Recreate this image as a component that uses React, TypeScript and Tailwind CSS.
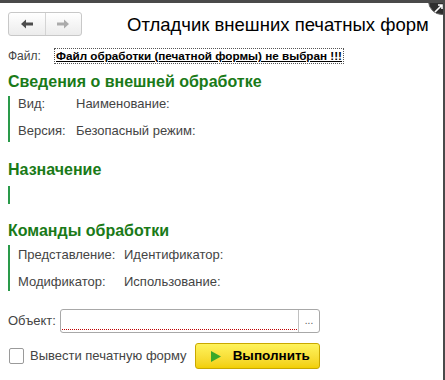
import React from 'react';

const Group: React.FC<{ title: string; children?: React.ReactNode; lineClass: string; className?: string }> = ({
  title,
  children,
  lineClass,
  className,
}) => (
  <div className={`flex flex-col ${className ?? ''}`}>
    <div className="text-[16px] font-bold text-[#1a7a18] leading-[18px]">{title}</div>
    <div className={`border-l-2 border-[#2a9a4a] ${lineClass}`}>{children}</div>
  </div>
);

export default function App() {
  return (
    <div
      className="relative w-[445px] h-[380px] overflow-hidden bg-white border-t-[3px] border-r-2 border-[#4a4a4a] text-[#444]"
      style={{ fontFamily: '"Liberation Sans", Arial, sans-serif' }}
    >
      <div className="absolute -right-[13px] -top-[16px] w-[28px] h-[28px] rounded-full bg-[#2e2e2e] border border-[#666]">
        <svg width="10" height="10" viewBox="0 0 10 10" className="absolute left-[5px] top-[15px]">
          <path d="M1 9 L8 2 M4 2 H8 V6" stroke="white" strokeWidth="1.6" fill="none" />
        </svg>
      </div>

      <div className="flex items-center pl-2 pt-[7px]">
        <div className="flex h-[24px] w-[74px] rounded-[3px] border border-[#c8c8c8] bg-gradient-to-b from-white to-[#ececec]">
          <div className="flex flex-1 items-center justify-center border-r border-[#d4d4d4]">
            <svg width="14" height="10" viewBox="0 0 14 10">
              <path d="M1 5 L6 0.5 V3.5 H13 V6.5 H6 V9.5 Z" fill="#4d4d4d" />
            </svg>
          </div>
          <div className="flex flex-1 items-center justify-center">
            <svg width="14" height="10" viewBox="0 0 14 10">
              <path d="M13 5 L8 0.5 V3.5 H1 V6.5 H8 V9.5 Z" fill="#ababab" />
            </svg>
          </div>
        </div>
        <div className="ml-[45px] mt-[3px] text-[18.5px] text-black leading-[24px]">Отладчик внешних печатных форм</div>
      </div>

      <div className="flex items-center pl-2 mt-[11px] h-[16px]">
        <span className="text-[12px] w-[46px]">Файл:</span>
        <span className="border border-dotted border-[#555] px-[1px] text-[11.7px] font-bold text-black underline leading-[14px]">
          Файл обработки (печатной формы) не выбран !!!
        </span>
      </div>

      <div className="flex flex-col pl-2 mt-[9px]">
        <Group title="Сведения о внешней обработке" lineClass="mt-[5px] h-[46px]">
          <div className="flex flex-col gap-[11px] pl-[8px] text-[13px] leading-[16px]">
            <div className="flex"><span className="w-[58px]">Вид:</span><span>Наименование:</span></div>
            <div className="flex"><span className="w-[58px]">Версия:</span><span>Безопасный режим:</span></div>
          </div>
        </Group>
        <Group title="Назначение" className="mt-[19px]" lineClass="mt-[7px] h-[18px]" />
        <Group title="Команды обработки" className="mt-[18px]" lineClass="mt-[5px] h-[46px]">
          <div className="flex flex-col gap-[11px] pl-[8px] pt-[2px] text-[13px] leading-[16px]">
            <div className="flex"><span className="w-[106px]">Представление:</span><span>Идентификатор:</span></div>
            <div className="flex"><span className="w-[106px]">Модификатор:</span><span>Использование:</span></div>
          </div>
        </Group>
      </div>

      <div className="flex items-center pl-2 mt-[18px]">
        <span className="text-[13px] w-[52px]">Объект:</span>
        <div className="flex h-[24px] w-[260px] rounded-[3px] border border-[#a8a8a8]">
          <div className="flex-1 flex items-end px-[1px] pb-[2px]">
            <div className="w-full border-b border-dotted border-[#c00000]" />
          </div>
          <div className="w-[21px] border-l border-[#c0c0c0] flex items-center justify-center text-[10px] text-[#555] leading-none">...</div>
        </div>
      </div>

      <div className="flex items-center pl-[9px] mt-[10px]">
        <div className="w-[15px] h-[16px] rounded-[2px] border border-[#9a9a9a] bg-white" />
        <span className="ml-[6px] text-[13px]">Вывести печатную форму</span>
        <div className="ml-[8px] flex items-center h-[26px] w-[125px] rounded-[3px] border border-[#c9a800] bg-gradient-to-b from-[#fff35a] to-[#f2cf00]">
          <svg width="10" height="11" viewBox="0 0 10 11" className="ml-[15px]">
            <path d="M0 0 L10 5.5 L0 11 Z" fill="#3aa829" />
          </svg>
          <span className="ml-[12px] text-[13.5px] font-bold text-black">Выполнить</span>
        </div>
      </div>
    </div>
  );
}
